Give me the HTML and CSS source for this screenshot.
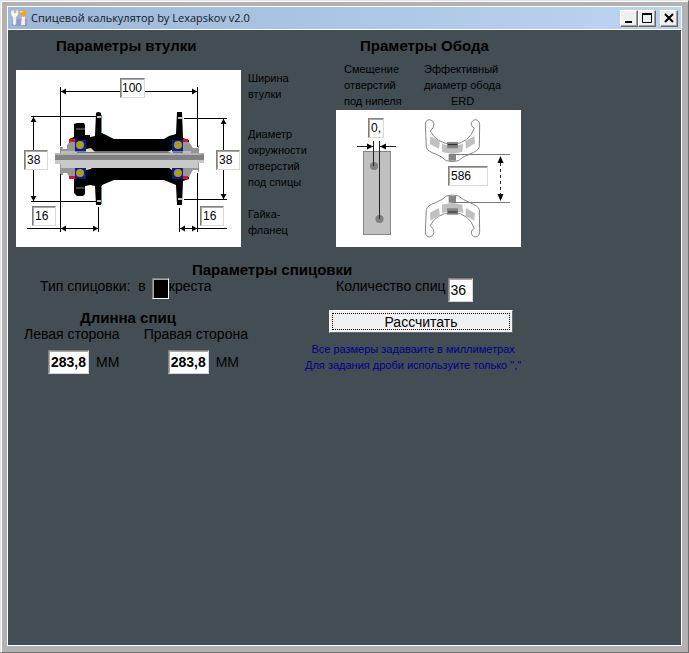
FILE: index.html
```html
<!DOCTYPE html>
<html lang="ru">
<head>
<meta charset="utf-8">
<meta name="viewport" content="width=device-width, initial-scale=1">
<title>Спицевой калькулятор by Lexapskov v2.0</title>
<link rel="stylesheet" href="styles.css">
</head>
<body>
<div class="window">
  <header class="titlebar">
    <svg class="app-icon" width="16" height="16" viewBox="0 0 16 16" aria-hidden="true">
      <rect x="1" y="9" width="15" height="7" rx="1" fill="#8e9cc9"/>
      <path d="M0 1v4l2 2v7q1 2 3 0V7l2-2V1L5 0v3H3V0z" fill="#f7f7f4" stroke="#c9ced2" stroke-width=".6"/>
      <path d="M11 6h3v9h-4z" fill="#edf0f8"/>
      <path d="M8 1l6-1 1 1v5l-3 1-3-2z" fill="#f4a526"/>
      <path d="M8 1l5 0-3 2z" fill="#ffd67b"/>
    </svg>
    <h1 class="title">Спицевой калькулятор by Lexapskov v2.0</h1>
    <div class="window-buttons">
      <button class="window-button" type="button" aria-label="Свернуть"><svg width="14" height="14" viewBox="0 0 14 14"><path d="M3 11h7" stroke="#000" stroke-width="2"/></svg></button>
      <button class="window-button" type="button" aria-label="Развернуть"><svg width="14" height="14" viewBox="0 0 14 14"><path d="M2.500 2v9.500h9V2" fill="none" stroke="#000"/><path d="M2 3h10" stroke="#000" stroke-width="2"/></svg></button>
      <button class="window-button close" type="button" aria-label="Закрыть"><svg width="14" height="14" viewBox="0 0 14 14"><path d="M3 3l8 8M11 3l-8 8" stroke="#000" stroke-width="2"/></svg></button>
    </div>
  </header>

  <main class="client">
    <form class="form">
      <div class="columns">
        <section class="hub">
          <h2 class="heading hub-heading">Параметры втулки</h2>
          <div class="hub-body">
            <div class="diagram">
              <svg width="225" height="177" viewBox="0 0 225 177" aria-hidden="true">
                <g fill="#000">
                  <path d="M80 43q2-2 5 0l1 20 12 6h50l5-3 7-2 1-22h5l1 26 6 2v39l-6 2-1 24h-5l-1-20-12-5h-50l-12 5-1 20h-5l-1-19-9-2v-46l9-2z"/>
                  <path d="M58 54l3-1h7l1 2v10h5v50l-5 1v8l-2 2h-6l-3-3v-14l-5-4V69l5-2z"/>
                </g>
                <path d="M60 59h9M60 118h9" stroke="#888"/>
                <path d="M81 47h4M81 131h4M162 48h4M162 129h4" stroke="#b9c6c2" stroke-width="2"/>
                <path d="M85.500 45v18M85.500 116v18" stroke="#5a9384"/>
                <path d="M44 77h3v2h4v-4l3-3h7v36h-7l-3-5h-4v2h-3zM167 72h6l4 6h5v-2h1v26h-1v-2h-5l-4 7h-6z" fill="#969696"/>
                <path d="M70 79l5-1 4 4h-9zM70 100l5-1 2-3h-7zM152 82l5-3v4zM152 97l5 4v-4z" fill="#deddb3"/>
                <path d="M53 69h6v3h-6zM53 106h6v3h-6zM167 69h5v3h-5zM167 106h5v3h-5z" fill="#f00c16"/>
                <path d="M59 70h11v12H59zM59 97h11v12H59zM156 70h11v12h-11zM156 97h11v12h-11z" fill="#101898"/>
                <g fill="#a5a11e"><circle cx="64" cy="75" r="4"/><circle cx="64" cy="103" r="4"/><circle cx="162" cy="75" r="4"/><circle cx="162" cy="103" r="4"/></g>
                <path d="M39 83h149v10h-6v5H45v-4h-6z" fill="#c8c8c8"/>
                <path d="M39 83h149v3H39z" fill="#b3b3b3"/>
                <path d="M39 85h143l6-1v6H39z" fill="#828282"/>
                <path d="M45 82h130" stroke="#e5e5e5"/>
                <g fill="none" stroke="#000">
                  <path d="M44.500 17v59M44.500 104v58M181.500 17v60M181.500 103v59M45 21.500h136M17.500 47v84M15 46.500h65M15 131.500h65M207.500 48v81M168 48.500h43M168 129.500h43M11 158.500h71M82.500 137v25M163.500 138v24M164 158.500h47"/>
                </g>
                <g fill="#000">
                  <path d="M45 21.500l5-3v6zM181 21.500l-5-3v6zM17.500 47l-3 5h6zM17.500 131l-3-5h6zM207.500 49l-3 5h6zM207.500 129l-3-5h6zM45 158.500l5-3v6zM82 158.500l-5-3v6zM164 158.500l5-3v6zM181 158.500l-5-3v6z"/>
                </g>
              </svg>
              <input class="field width" aria-label="Ширина втулки" value="100">
              <input class="field left-circle" aria-label="Диаметр окружности, слева" value="38">
              <input class="field right-circle" aria-label="Диаметр окружности, справа" value="38">
              <input class="field left-nut" aria-label="Гайка-фланец, слева" value="16">
              <input class="field right-nut" aria-label="Гайка-фланец, справа" value="16">
            </div>
            <div class="hub-labels">
              <p>Ширина<br>втулки</p>
              <p class="spaced">Диаметр<br>окружности<br>отверстий<br>под спицы</p>
              <p>Гайка-<br>фланец</p>
            </div>
          </div>
        </section>

        <section class="rim">
          <h2 class="heading rim-heading">Праметры Обода</h2>
          <div class="rim-labels">
            <label for="offset">Смещение<br>отверстий<br>под нипеля</label>
            <label for="erd">Эффективный<br>диаметр обода<br><span class="erd-name">ERD</span></label>
          </div>
          <div class="diagram">
            <svg width="185" height="137" viewBox="0 0 185 137" aria-hidden="true">
              <rect x="27.500" y="41.500" width="27" height="83" fill="#c0c0c0" stroke="#858585"/>
              <circle cx="38" cy="56" r="4" fill="#808080"/><circle cx="43.500" cy="109" r="4" fill="#808080"/>
              <path d="M37.500 31v25M43.500 31v78" stroke="#222"/>
              <path d="M21 36.500h17M43 36.500h17" stroke="#222"/>
              <path d="M37 36.500l-6-3v6zM44 36.500l6-3v6z" fill="#000"/>
              <g transform="translate(78 -2) scale(.3333)">
                <g id="rim-profile">
                  <path d="M47 35Q34 36 34 50L37 118Q40 130 65 138Q86 147 97 158Q115 164 133 158Q145 147 168 138Q192 129 196 117L197 50Q196 36 184 35Q171 38 172 50Q174 58 181 60Q167 104 115 110Q65 104 49 69Q60 60 60 48Q58 36 47 35Z" fill="#fff" stroke="#858585" stroke-width="3"/>
                  <path d="M49 85l29 14-3 23-27-14zM84 107q31 11 64 0l-3 25-30 6-31-6zM154 99l27-15 2 22-27 16z" fill="#c0c0c0"/>
                  <path d="M99 102h33v19H99zM104 138h22v20h-22z" fill="#858585"/>
                  <path d="M102 110h28" stroke="#222" stroke-width="3"/>
                </g>
                <use href="#rim-profile" transform="translate(0 422) scale(1 -1)"/>
              </g>
              <path d="M117 44.500h57M117 92.500h57" stroke="#777"/>
              <path d="M164.500 53v31" stroke="#222" stroke-dasharray="3 3"/>
              <path d="M164.500 46l-3 7h6zM164.500 91l-3-7h6z" fill="#000"/>
            </svg>
            <input class="field offset" id="offset" value="0,75">
            <input class="field erd" id="erd" value="586">
          </div>
        </section>
      </div>

      <h2 class="heading lacing-heading">Параметры спицовки</h2>
      <div class="columns lacing">
        <div class="line cross-line">
          <label for="cross">Тип спицовки:&nbsp; в</label>
          <input class="box cross" id="cross" value="3">
          <span>креста</span>
        </div>
        <div class="line count-line">
          <label for="count">Количество спиц</label>
          <input class="box count" id="count" value="36">
        </div>
      </div>

      <div class="columns results">
        <section>
          <h2 class="heading length-heading">Длинна спиц</h2>
          <div class="lengths">
            <div>
              <label for="left">Левая сторона</label>
              <div class="length"><input class="box result" id="left" value="283,8"><span>ММ</span></div>
            </div>
            <div>
              <label for="right">Правая сторона</label>
              <div class="length"><input class="box result" id="right" value="283,8"><span>ММ</span></div>
            </div>
          </div>
        </section>
        <section class="action">
          <button class="calculate" type="button">Рассчитать</button>
          <p class="hint">Все размеры задаваите в миллиметрах<br>Для задания дроби используите только ","</p>
        </section>
      </div>
    </form>
  </main>
</div>
</body>
</html>
```
FILE: styles.css
```css
* {
  box-sizing: border-box;
}

body {
  margin: 0;
  font: 14px/16px "Liberation Sans", Arial, sans-serif;
  color: #000;
}

h1, h2, p {
  margin: 0;
}

input, button {
  font: inherit;
  color: inherit;
  margin: 0;
}

.window {
  display: flex;
  flex-direction: column;
  min-height: 100vh;
  padding: 5px 6px 6px 5px;
  background: #b2b2b2;
  border: 1px solid;
  border-color: #e4e4e4 #707070 #707070 #e4e4e4;
  box-shadow: inset 1px 1px #fff;
}

.titlebar {
  display: flex;
  align-items: center;
  height: 24px;
  margin-left: 1px;
  padding: 0 3px;
  border: 1px solid #fff;
  background: linear-gradient(to right, #9cb7d8, #bdd4f1);
}

.app-icon {
  flex: none;
}

.title {
  flex: 1;
  margin-left: 4px;
  font: 11px/20px "Open Sans", sans-serif;
  color: #101820;
}

.window-buttons {
  display: flex;
}

.window-button {
  display: grid;
  place-items: center;
  width: 18px;
  height: 17px;
  padding: 0;
  background: #f0f0f0;
  border: 1px solid;
  border-color: #fff #696969 #696969 #fff;
  box-shadow: inset -1px -1px #a0a0a0;
}

.close {
  margin-left: 4px;
}

.client {
  flex: 1;
  margin-left: 1px;
  padding: 8px 8px 0;
  background: #434e54;
  border: solid #fff;
  border-width: 0 1px 1px;
}

.columns {
  display: grid;
  grid-template-columns: 320px 1fr;
}

.heading {
  font-size: 15px;
  line-height: 16px;
  font-weight: bold;
}

.hub-heading {
  margin-left: 40px;
}

.hub-body {
  display: flex;
  gap: 7px;
  margin-top: 16px;
}

.diagram {
  position: relative;
  width: max-content;
  background: #fff;
}

.diagram svg {
  display: block;
}

.hub-labels, .rim-labels, .hint {
  font-size: 11px;
}

.hub-labels .spaced {
  margin: 24px 0 16px;
}

.rim-heading {
  margin-left: 24px;
}

.rim-labels {
  display: grid;
  grid-template-columns: 80px max-content;
  margin: 7px 0 1px 8px;
}

.erd-name {
  display: block;
  text-align: center;
}

.field, .box {
  padding: 0 2px;
  background: #fff;
  border: 1px solid;
  border-color: #808080 #d8d8d8 #d8d8d8 #808080;
  border-radius: 0;
  box-shadow: inset 1px 1px #a8a8a8;
}

.field {
  position: absolute;
  width: 24px;
  height: 20px;
  font-size: 12px;
}

.width {
  left: 104px;
  top: 8px;
  width: 25px;
  padding: 0 1px;
}

.left-circle {
  left: 8px;
  top: 80px;
}

.right-circle {
  left: 200px;
  top: 80px;
}

.left-nut {
  left: 16px;
  top: 136px;
}

.right-nut {
  left: 184px;
  top: 136px;
}

.offset {
  left: 32px;
  top: 8px;
  width: 16px;
}

.erd {
  left: 112px;
  top: 56px;
  width: 40px;
}

.lacing-heading {
  margin: 15px 0 0 176px;
}

.line {
  display: flex;
  align-items: flex-start;
}

.cross-line {
  padding-left: 24px;
}

.cross {
  width: 17px;
  height: 21px;
  margin-left: 6px;
  background: #000;
  border-color: #808080 #fff #fff #808080;
}

.count {
  width: 25px;
  height: 24px;
  margin-left: 2px;
}

.results {
  margin-top: 8px;
}

.length-heading {
  margin-left: 64px;
}

.lengths {
  display: flex;
  gap: 24px;
  padding-left: 8px;
}

.length {
  display: flex;
  align-items: center;
  gap: 7px;
  margin: 8px 0 0 24px;
}

.result {
  width: 41px;
  height: 24px;
  font-weight: bold;
}

.action {
  width: 205px;
}

.calculate {
  width: 184px;
  height: 23px;
  margin-left: -7px;
  padding: 0;
  background: #f0f0f0;
  border: 1px solid;
  border-color: #fff #696969 #696969 #fff;
  outline: 1px dotted #000;
  outline-offset: -4px;
}

.hint {
  width: max-content;
  margin: 8px 0 0 -31px;
  color: #00008b;
  text-align: center;
}
```
